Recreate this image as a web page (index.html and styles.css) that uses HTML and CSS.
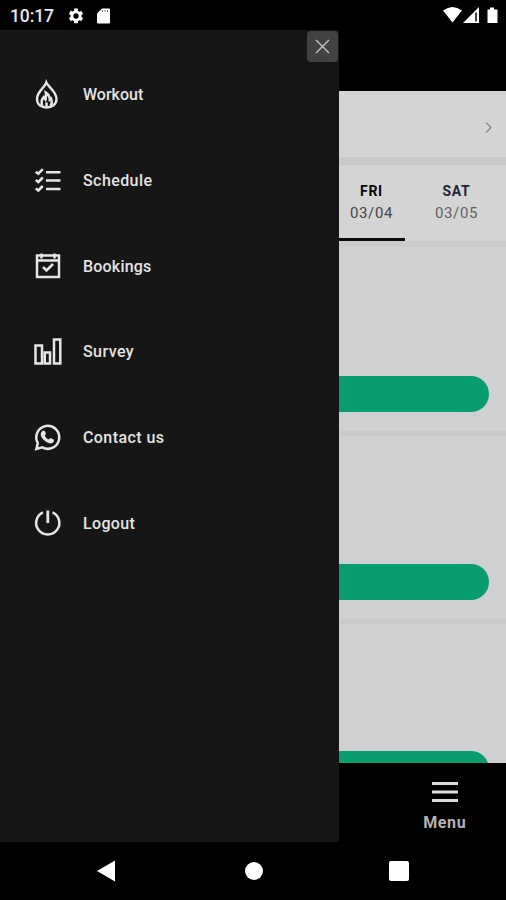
FILE: index.html
```html
<!DOCTYPE html>
<html lang="en">
<head>
<meta charset="utf-8">
<title>Menu</title>
<link rel="stylesheet" href="styles.css">
</head>
<body>
<header class="status">
  <span class="clock">10:17</span>
  <svg class="gear" width="18" height="18" viewBox="0 0 24 24"><path fill="#fff" d="M19.14 12.94c.04-.3.06-.61.06-.94s-.02-.64-.07-.94l2.03-1.58a.49.49 0 0 0 .12-.61l-1.92-3.32a.49.49 0 0 0-.59-.22l-2.39.96c-.5-.38-1.03-.7-1.62-.94l-.36-2.54A.48.48 0 0 0 13.92 2h-3.84a.47.47 0 0 0-.47.41l-.36 2.54c-.59.24-1.13.57-1.62.94l-2.39-.96a.48.48 0 0 0-.59.22L2.74 8.87a.48.48 0 0 0 .12.61l2.03 1.58a6 6 0 0 0 0 1.88l-2.03 1.58a.49.49 0 0 0-.12.61l1.92 3.32c.12.22.37.29.59.22l2.39-.96c.5.38 1.03.7 1.62.94l.36 2.54c.05.24.24.41.48.41h3.84c.24 0 .44-.17.47-.41l.36-2.54c.59-.24 1.13-.56 1.62-.94l2.39.96c.22.08.47 0 .59-.22l1.92-3.32a.48.48 0 0 0-.12-.61zM12 15.6A3.6 3.6 0 1 1 12 8.400a3.600 3.600 0 0 1 0 7.200z"/></svg>
  <svg class="card" width="13" height="16" viewBox="0 0 13 16"><path fill="#fff" d="M5 .5h7q1 0 1 1v13q0 1-1 1H1q-1 0-1-1V5.500z"/><path stroke="#777" d="M5.500 2v2M8 2v2M10.500 2v2"/></svg>
  <svg class="signals" width="56" height="18" viewBox="0 0 56 18"><g fill="#fff"><path d="M0 4.500Q9.500-2.500 19 4.500L9.500 16.500z"/><path d="M20 17L36 1v16z"/><path d="M44.500 3.500h2.500V1.500h4v2h3.500V17h-10z"/></g><path d="M33 6.500v9" stroke="#000" stroke-width="1.500"/></svg>
</header>

<div class="screen">
  <nav class="drawer">
    <button class="close" aria-label="Close"><svg width="31" height="31" viewBox="0 0 31 31"><path d="M9 9l13 13M22 9L9 22" stroke="#c4c4c4" stroke-width="1.400"/></svg></button>
    <a class="item"><svg class="icon" viewBox="0 0 32 32"><path stroke-width="2.400" d="M15.300 3.500C14 8.500 6 12.500 6 20c0 5.500 4.200 8.500 9.600 8.500S25.500 25.500 25.500 20c0-7.500-8-11.500-10.200-16.500z"/><path d="M11.300 27c-1.500-4-.8-6.500 1.500-9l1.700 2.500c.8-2.500.8-4.500.3-7 2.700 1.500 3.900 4 4 7l1.200-1c1.300 3 .8 5.500-.6 7.500M15.500 27.500v-4"/></svg><span class="workout">Workout</span></a>
    <a class="item"><svg class="icon" viewBox="0 0 32 32"><path d="M15 7.200h14.500M15 15.500h14.500M15 24h14.500M4.800 6.700l2.500 2 4.500-4.500M4.800 15l2.500 2 4.500-4.500M4.800 23.500l2.500 2 4.500-4.500"/></svg><span class="schedule">Schedule</span></a>
    <a class="item"><svg class="icon" viewBox="0 0 32 32"><path d="M6 5.500h22v21.500H6zM6 10.500h22M10.500 3.500v5M23.500 3.500v5"/><path stroke-width="2.600" d="M12 17l3.500 3.500 6.500-6.500"/></svg><span class="bookings">Bookings</span></a>
    <a class="item"><svg class="icon" viewBox="0 0 32 32"><path d="M4.500 9.500h6.500v18H4.500zM13.800 16.500h5.200v11h-5.200zM23 3.500h6.300v24H23z"/></svg><span class="survey">Survey</span></a>
    <a class="item"><svg class="icon" viewBox="0 0 32 32"><path stroke-width="2.500" d="M5.400 27l1.400-6a11.500 11.500 0 1 1 4.500 4.400z"/><path class="solid" d="M11.300 9q1.700-1.300 2.700.5l1 2.300-1.300 2q1.200 2.500 3.800 3.700l2-1.500 3.100 1.600q1.300 1.300-.8 3.200-3.200 1.700-7.500-1.500-4.600-3.600-4.600-7 0-2 1.600-3.300z"/></svg><span class="contact">Contact us</span></a>
    <a class="item"><svg class="icon" viewBox="0 0 32 32"><path d="M12 5.300a11.600 11.600 0 1 0 9.500 0"/><path stroke-width="2.800" d="M16.800 3.500v12.500"/></svg><span class="logout">Logout</span></a>
  </nav>

  <main class="app">
    <div class="topbar"></div>
    <div class="selector"><svg width="9" height="13" viewBox="0 0 9 13"><path d="M2 1.500l5 5-5 5" fill="none" stroke="#858585" stroke-width="1.200"/></svg></div>
    <div class="tabs">
      <div class="tab active"><b>FRI</b><span>03/04</span></div>
      <div class="tab"><b>SAT</b><span>03/05</span></div>
    </div>
    <div class="list">
      <section class="slot"><div class="book"></div></section>
      <section class="slot"><div class="book"></div></section>
      <section class="slot"><div class="book"></div></section>
    </div>
    <footer class="bottom">
      <svg width="26" height="20" viewBox="0 0 26 20"><path d="M0 1.500h26M0 10h26M0 18.500h26" stroke="#ddd" stroke-width="2.800"/></svg>
      <span>Menu</span>
    </footer>
  </main>
</div>

<footer class="system">
  <svg width="18" height="22" viewBox="0 0 18 22"><path fill="#fff" d="M0 11L18 .5v21z"/></svg>
  <span class="home"></span>
  <span class="recent"></span>
</footer>
</body>
</html>
```
FILE: styles.css
```css
* { box-sizing: border-box; }
body {
  margin: 0;
  width: 506px;
  height: 900px;
  overflow: hidden;
  background: #000;
  font-family: Roboto, "Liberation Sans", sans-serif;
  display: flex;
  flex-direction: column;
}
svg { display: block; flex: none; }
.status {
  height: 30px;
  display: flex;
  align-items: center;
  padding: 2px 7px 0 10px;
}
.clock { width: 57px; color: #e8e8e8; font-size: 17.500px; font-weight: 500; letter-spacing: -.1px; }
.card { margin-left: 12px; }
.signals { margin-left: auto; margin-top: -2px; }
.screen { height: 812px; display: flex; }
.drawer {
  width: 338.500px;
  background: #161616;
  display: flex;
  flex-direction: column;
  border-radius: 0 0 2px 0;
}
.close {
  align-self: flex-end;
  width: 31px;
  height: 31px;
  margin: 1px 1px 0 0;
  padding: 0;
  border: 0;
  border-radius: 4px;
  background: #424242;
}
.item {
  height: 85.700px;
  flex: none;
  display: flex;
  align-items: center;
  gap: 20px;
  padding-left: 31px;
  color: #e4e4e4;
  font-size: 16px;
  font-weight: 500;
}
.close + .item { margin-top: -10px; }
.icon {
  width: 32px;
  height: 32px;
  fill: none;
  stroke: #e6e6e6;
  stroke-width: 2.500;
}
.icon .solid { fill: #e6e6e6; stroke: none; }
.schedule, .survey, .contact { letter-spacing: .42px; }
.bookings { letter-spacing: .2px; }
.logout { letter-spacing: .35px; }
.app {
  flex: 1;
  min-width: 0;
  display: flex;
  flex-direction: column;
}
.topbar { height: 61px; }
.selector {
  height: 74px;
  background: #d4d4d4;
  border-bottom: 8px solid #c8c8c8;
  display: flex;
  align-items: center;
  justify-content: flex-end;
  padding: 6px 13px 0 0;
}
.tabs { height: 76px; background: #d4d4d4; display: flex; }
.tab {
  width: 84px;
  display: flex;
  flex-direction: column;
  align-items: center;
  padding-top: 17px;
  font-size: 15px;
  color: #606063;
}
.tab b { font-size: 14px; line-height: 18px; color: #25233c; letter-spacing: .7px; }
.tab span { line-height: 26px; letter-spacing: .6px; }
.active { width: 66px; border-bottom: 3px solid #0b0b0b; color: #454545; }
.active b { color: #080808; }
.tab:last-child { margin-left: 10px; }
.list {
  height: 522px;
  overflow: hidden;
  background: #cfd0d2;
  border-top: 6px solid #c9cbcc;
}
.slot { height: 187.700px; padding-top: 128.500px; border-bottom: 5px solid #c8c9c9; }
.slot:first-child { height: 189px; }
.slot + .slot { padding-top: 127.500px; }
.book { width: 150.500px; height: 36px; background: #089c6f; border-radius: 0 18px 18px 0; }
.bottom {
  height: 79px;
  padding: 19px 0 0 45px;
  display: flex;
  flex-direction: column;
  align-items: center;
  gap: 11px;
  color: #b2b2b2;
  font-size: 16px;
  font-weight: 700;
  line-height: 19px;
  letter-spacing: .6px;
}
.system { height: 58px; display: flex; align-items: center; padding-left: 97px; }
.home { width: 18px; height: 18px; border-radius: 50%; background: #fff; margin-left: 129.500px; }
.recent { width: 20px; height: 20px; border-radius: 2px; background: #fff; margin-left: 126px; }
```
